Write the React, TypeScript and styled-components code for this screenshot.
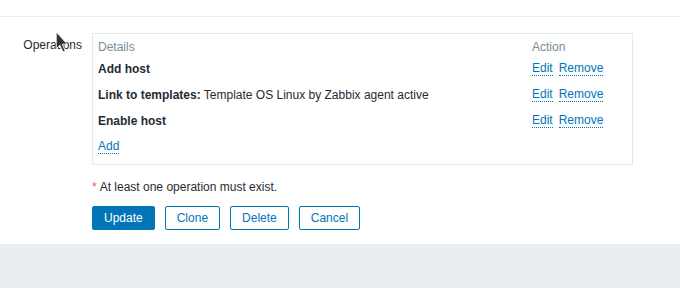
import React from "react";
import styled, { createGlobalStyle } from "styled-components";

const GlobalStyle = createGlobalStyle`
  html, body { margin: 0; padding: 0; }
  body {
    background: #ebeef0;
    font-family: "Liberation Sans", Arial, sans-serif;
    font-size: 12px;
    line-height: 14px;
    color: #1f2c33;
  }
`;

const Page = styled.div`
  position: relative;
  background: #ffffff;
  padding-top: 16px;
  padding-bottom: 14px;
`;

const Divider = styled.div`
  height: 1px;
  background: #ebeef0;
`;

const FormRow = styled.div`
  display: grid;
  grid-template-columns: 82px 1fr;
  column-gap: 10px;
  padding-top: 16px;
`;

const Label = styled.div`
  text-align: right;
  padding-top: 5px;
`;

const Field = styled.div`
  display: flex;
  flex-direction: column;
  align-items: flex-start;
`;

const OpsTable = styled.div`
  box-sizing: border-box;
  width: 541px;
  border: 1px solid #e6e9eb;
  padding-bottom: 4px;
  display: grid;
  grid-template-columns: 1fr 105px;
`;

const HeadCell = styled.div`
  color: #768d99;
  padding: 6px 5px 2px;
`;

const Cell = styled.div`
  padding: 6px 5px;
  display: flex;
  gap: 6px;
  white-space: nowrap;
`;

const Strong = styled.b`
  font-weight: bold;
`;

const Link = styled.a`
  color: #0275b8;
  text-decoration: none;
  border-bottom: 1px dotted #0275b8;
  cursor: pointer;
  line-height: 13px;
`;

const Required = styled.div`
  margin-top: 15px;
  display: flex;
  gap: 3px;
`;

const Star = styled.span`
  color: #e45959;
`;

const Buttons = styled.div`
  margin-top: 12px;
  display: flex;
  gap: 10px;
`;

const Button = styled.button<{ $primary?: boolean }>`
  box-sizing: border-box;
  height: 24px;
  padding: 0 11px;
  border: 1px solid #0275b8;
  border-radius: 2px;
  font-family: "Liberation Sans", Arial, sans-serif;
  font-size: 12px;
  line-height: 14px;
  background: ${(p) => (p.$primary ? "#0275b8" : "#ffffff")};
  color: ${(p) => (p.$primary ? "#ffffff" : "#0275b8")};
  cursor: pointer;
`;

const Cursor = styled.svg`
  position: absolute;
  left: 55px;
  top: 31px;
  width: 14px;
  height: 22px;
  pointer-events: none;
`;

const ops: { bold: string; rest?: string }[] = [
  { bold: "Add host" },
  { bold: "Link to templates:", rest: " Template OS Linux by Zabbix agent active" },
  { bold: "Enable host" },
];

export default function App() {
  return (
    <>
      <GlobalStyle />
      <Page>
        <Divider />
        <FormRow>
          <Label>Operations</Label>
          <Field>
            <OpsTable>
              <HeadCell>Details</HeadCell>
              <HeadCell>Action</HeadCell>
              {ops.map((op) => (
                <React.Fragment key={op.bold}>
                  <Cell>
                    <span>
                      <Strong>{op.bold}</Strong>
                      {op.rest}
                    </span>
                  </Cell>
                  <Cell>
                    <Link>Edit</Link>
                    <Link>Remove</Link>
                  </Cell>
                </React.Fragment>
              ))}
              <Cell>
                <Link>Add</Link>
              </Cell>
              <Cell />
            </OpsTable>
            <Required>
              <Star>*</Star>
              <span>At least one operation must exist.</span>
            </Required>
            <Buttons>
              <Button $primary>Update</Button>
              <Button>Clone</Button>
              <Button>Delete</Button>
              <Button>Cancel</Button>
            </Buttons>
          </Field>
        </FormRow>
        <Cursor viewBox="0 0 13 21">
          <path
            d="M1 1 L1 17 L4.5 13.5 L7.5 20 L9.5 19 L6.8 12.6 L11.5 12.6 Z"
            fill="#333333"
            stroke="#ffffff"
            strokeWidth="0.8"
            strokeLinejoin="round"
          />
        </Cursor>
      </Page>
    </>
  );
}
